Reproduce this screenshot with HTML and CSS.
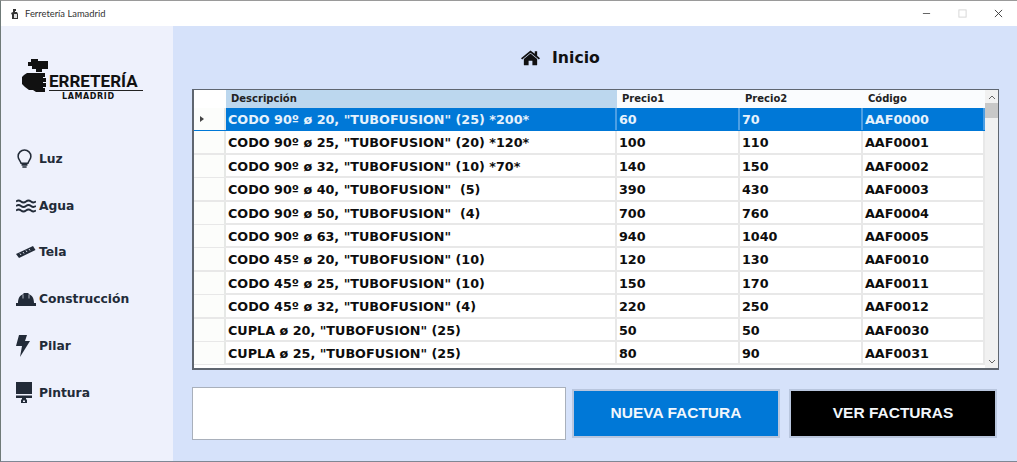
FILE: index.html
```html
<!DOCTYPE html>
<html lang="es">
<head>
<meta charset="utf-8">
<title>Ferretería Lamadrid</title>
<link rel="stylesheet" href="styles.css">
</head>
<body>
<div class="window">
  <header class="titlebar">
    <svg class="app-icon" viewBox="0 0 12 12"><path d="M4 1h3v2H6v1h2l1 2v5H3V7L2 5l2-1z" fill="#333"/><path d="M5 6h3v4H5z" fill="#ddd"/></svg>
    <span class="app-title">Ferretería Lamadrid</span>
    <div class="controls">
      <svg class="ctl" viewBox="0 0 10 10"><path d="M1 5h8" stroke="#555" stroke-width="1"/></svg>
      <svg class="ctl" viewBox="0 0 10 10"><rect x="1" y="1" width="8" height="8" fill="none" stroke="#d4d4d4"/></svg>
      <svg class="ctl" viewBox="0 0 10 10"><path d="M1 1l8 8M9 1l-8 8" stroke="#333" stroke-width="1"/></svg>
    </div>
  </header>
  <div class="body">
    <aside class="sidebar">
      <div class="logo">
        <svg class="logo-hand" viewBox="0 0 28 34">
          <path d="M9 0h7v2h10v8h-6v3h-6v-3H10V7H6V3h3z" fill="#111"/>
          <path d="M5 14h18v4h-2v1h3v4h-3v1h3v4h-3v1h2v4h-9l-3-2H7l-4-3-3-3v-7l2-2z" fill="#111"/>
        </svg>
        <div class="logo-text">
          <span class="logo-main">ERRETERÍA</span>
          <span class="logo-rule"></span>
          <span class="logo-sub">LAMADRID</span>
        </div>
      </div>
      <nav class="menu">
        <a class="menu-item"><span class="menu-icon"><svg viewBox="0 0 20 24" width="17" height="21"><path d="M10 2a7.500 7.500 0 0 0-7.500 7.500c0 3.200 2.600 5 3.400 8h8.200c.8-3 3.400-4.800 3.400-8A7.500 7.500 0 0 0 10 2z" fill="none" stroke="#222b38" stroke-width="1.800"/><path d="M6.500 19.500h7M7.500 22h5" stroke="#222b38" stroke-width="2"/></svg></span>Luz</a>
        <a class="menu-item"><span class="menu-icon"><svg viewBox="0 0 20 14" width="20" height="14"><path d="M0 2.500q2.500-2 5 0t5 0 5 0 5 0M0 7q2.500-2 5 0t5 0 5 0 5 0M0 11.500q2.500-2 5 0t5 0 5 0 5 0" fill="none" stroke="#222b38" stroke-width="1.800"/></svg></span>Agua</a>
        <a class="menu-item"><span class="menu-icon"><svg viewBox="0 0 20 12" width="20" height="12"><path d="M0 8L17 0l2.500 4L3 12z" fill="#222b38"/><path d="M4 7.500l1 1.500M7 6l1 1.500M10 4.500l1 1.500M13 3l1 1.500" stroke="#eef1fc" stroke-width=".9"/></svg></span>Tela</a>
        <a class="menu-item"><span class="menu-icon"><svg viewBox="0 0 20 15" width="20" height="15"><path d="M2 11C2 6 4 3 7.500 2V1h5v1C16 3 18 6 18 11h2v3H0v-3z" fill="#222b38"/><path d="M7 2.500v4M13 2.500v4" stroke="#eef1fc" stroke-width=".7"/></svg></span>Construcción</a>
        <a class="menu-item"><span class="menu-icon"><svg viewBox="0 0 14 22" width="14" height="22"><path d="M3 0h8L9 6h5L4 22l2-11H0z" fill="#222b38"/></svg></span>Pilar</a>
        <a class="menu-item"><span class="menu-icon"><svg viewBox="0 0 16 21" width="16" height="21"><path d="M0 0h16v12H0z" fill="#222b38"/><path d="M0 13.500h16v2.500H10v1.500h1v3.500H5v-3.500h1V16H0z" fill="#222b38"/><path d="M7 18.500h2v1.500H7z" fill="#eef1fc"/></svg></span>Pintura</a>
      </nav>
    </aside>
    <main class="main">
      <h1 class="heading">
        <svg class="home" viewBox="0 0 20 16"><path d="M10 3.200L3 9v6a.7.700 0 0 0 .7.700H8V11h4v4.700h4.300A.7.700 0 0 0 17 15V9z" fill="#111"/><path d="M10 0L0 8.200l1.200 1.400L10 2.400l8.800 7.200L20 8.200l-3-2.500V1h-2.500v2.600z" fill="#111"/></svg>
        Inicio
      </h1>
      <section class="grid">
        <div class="table">
          <div class="row head">
            <div class="gutter"></div>
            <div class="hcell sorted">Descripción</div>
            <div class="hcell">Precio1</div>
            <div class="hcell">Precio2</div>
            <div class="hcell">Código</div>
          </div>
          <div class="row selected"><div class="gutter"><span class="arrow"></span></div><div class="cell">CODO 90º ø 20, "TUBOFUSION" (25) *200*</div><div class="cell">60</div><div class="cell">70</div><div class="cell">AAF0000</div></div>
          <div class="row"><div class="gutter"></div><div class="cell">CODO 90º ø 25, "TUBOFUSION" (20) *120*</div><div class="cell">100</div><div class="cell">110</div><div class="cell">AAF0001</div></div>
          <div class="row"><div class="gutter"></div><div class="cell">CODO 90º ø 32, "TUBOFUSION" (10) *70*</div><div class="cell">140</div><div class="cell">150</div><div class="cell">AAF0002</div></div>
          <div class="row"><div class="gutter"></div><div class="cell">CODO 90º ø 40, "TUBOFUSION"  (5)</div><div class="cell">390</div><div class="cell">430</div><div class="cell">AAF0003</div></div>
          <div class="row"><div class="gutter"></div><div class="cell">CODO 90º ø 50, "TUBOFUSION"  (4)</div><div class="cell">700</div><div class="cell">760</div><div class="cell">AAF0004</div></div>
          <div class="row"><div class="gutter"></div><div class="cell">CODO 90º ø 63, "TUBOFUSION"</div><div class="cell">940</div><div class="cell">1040</div><div class="cell">AAF0005</div></div>
          <div class="row"><div class="gutter"></div><div class="cell">CODO 45º ø 20, "TUBOFUSION" (10)</div><div class="cell">120</div><div class="cell">130</div><div class="cell">AAF0010</div></div>
          <div class="row"><div class="gutter"></div><div class="cell">CODO 45º ø 25, "TUBOFUSION" (10)</div><div class="cell">150</div><div class="cell">170</div><div class="cell">AAF0011</div></div>
          <div class="row"><div class="gutter"></div><div class="cell">CODO 45º ø 32, "TUBOFUSION" (4)</div><div class="cell">220</div><div class="cell">250</div><div class="cell">AAF0012</div></div>
          <div class="row"><div class="gutter"></div><div class="cell">CUPLA ø 20, "TUBOFUSION" (25)</div><div class="cell">50</div><div class="cell">50</div><div class="cell">AAF0030</div></div>
          <div class="row"><div class="gutter"></div><div class="cell">CUPLA ø 25, "TUBOFUSION" (25)</div><div class="cell">80</div><div class="cell">90</div><div class="cell">AAF0031</div></div>
        </div>
        <div class="scrollbar">
          <svg class="sb-btn" viewBox="0 0 8 5"><path d="M1 4l3-3 3 3" fill="none" stroke="#666" stroke-width="1"/></svg>
          <div class="sb-thumb"></div>
          <svg class="sb-btn sb-down" viewBox="0 0 8 5"><path d="M1 1l3 3 3-3" fill="none" stroke="#666" stroke-width="1"/></svg>
        </div>
      </section>
      <div class="actions">
        <input class="search" type="text" aria-label="Buscar">
        <button class="btn btn-blue">NUEVA FACTURA</button>
        <button class="btn btn-black">VER FACTURAS</button>
      </div>
    </main>
  </div>
</div>
</body>
</html>
```
FILE: styles.css
```css
* { box-sizing: border-box; }
html, body { margin: 0; height: 100%; }
body { font-family: "DejaVu Sans", sans-serif; overflow: hidden; }

.window {
  width: 1017px; height: 462px;
  display: flex; flex-direction: column;
  border-top: 1px solid #9a9a9a;
  border-left: 1px solid #6f7a78;
  border-bottom: 1px solid #7f8794;
  background: #fff;
}
.titlebar { height: 25px; flex: none; display: flex; align-items: center; padding-left: 8px; background: #fff; }
.app-icon { width: 12px; height: 12px; }
.app-title { margin-left: 4px; font: 9.400px Lato, sans-serif; color: #333; }
.controls { margin-left: auto; display: flex; align-items: center; gap: 27px; padding-right: 14px; }
.ctl { width: 9px; height: 9px; display: block; }

.body { flex: 1; display: flex; min-height: 0; }

.sidebar { width: 172px; flex: none; background: #eef1fc; padding-top: 33px; }
.logo { display: flex; align-items: flex-start; margin-left: 21px; height: 46px; }
.logo-hand { width: 28px; height: 34px; display: block; flex: none; }
.logo-text { display: flex; flex-direction: column; align-items: flex-start; margin-left: -1px; padding-top: 13px; }
.logo-main { font: 700 17px/19px Roboto, sans-serif; color: #111; }
.logo-rule { width: 94px; height: 1px; background: #222; margin-top: -1px; }
.logo-sub { font: 700 8px/10px "DejaVu Sans", sans-serif; letter-spacing: .6px; color: #111; margin: 1px 0 0 13px; }

.menu { display: flex; flex-direction: column; margin-top: 30.400px; }
.menu-item {
  height: 46.800px; display: flex; align-items: center;
  font-weight: 700; font-size: 12.300px; color: #222b38;
}
.menu-icon { width: 38px; padding-left: 15px; display: flex; justify-content: flex-start; flex: none; }
.menu-icon svg { display: block; }

.main { flex: 1; background: #d6e2fa; padding: 0 18px 0 19px; min-width: 0; }
.heading {
  margin: 0; height: 63px; padding: 0 0 0 329px;
  display: flex; align-items: center; gap: 12px;
  font-size: 15.700px; font-weight: 700; color: #111; line-height: 18px;
}
.home { width: 19px; height: 16px; display: block; }

.grid {
  width: 807px; height: 281px;
  display: flex;
  background: #fff;
  border: 1px solid #5f6670; border-left-width: 2px; border-bottom-width: 2px;
  overflow: hidden;
}
.table { width: 791px; flex: none; }
.row {
  display: grid; grid-template-columns: 32px 391px 123px 123px 122px;
  height: 23.400px; border-bottom: 2px solid #e8e8e8;
}
.row.head { height: 18px; border-bottom: 0; }
.gutter { background: #fcfdfb; border-right: 2px solid #e6e8e6; display: flex; align-items: center; padding-left: 6px; }
.head .gutter { background: #fff; border-right: 0; }
.arrow { width: 0; height: 0; border-left: 4px solid #444; border-top: 3px solid transparent; border-bottom: 3px solid transparent; }
.hcell { font-size: 10px; font-weight: 700; color: #222; padding: 1px 0 0 5px; line-height: 16px; background: #fafcfe; }
.hcell.sorted { background: #bcd7ee; }
.cell {
  font-size: 12.750px; font-weight: 700; color: #0d0d0d;
  padding: 1px 0 0 2px; line-height: 21px; white-space: pre;
  border-right: 2px solid #e8e8e8;
}
.selected { border-bottom-color: #0078d7; }
.selected .cell { background: #0078d7; color: #e6f2fc; border-right-color: #4d9fe4; }

.scrollbar { flex: 1; background: #f1f1f1; display: flex; flex-direction: column; align-items: center; position: relative; }
.sb-btn { width: 8px; height: 5px; margin-top: 5px; flex: none; }
.sb-thumb { width: 100%; height: 15px; margin-top: 3px; background: #c8c8c8; }
.sb-down { margin-top: auto; margin-bottom: 4px; }

.actions { display: flex; align-items: center; margin-top: 17px; }
.search { width: 374px; height: 53px; background: #fff; border: 1px solid #a9b0bb; outline: 0; padding: 0; }
.btn {
  width: 208px; height: 49px;
  font: 700 15.500px "Liberation Sans", sans-serif; color: #f2f7fc;
  border: 2px solid #b9c6de; cursor: pointer; padding: 0 0 2px;
}
.btn-blue { margin-left: 6px; background: #0078d7; }
.btn-black { margin-left: 9px; background: #000; }
```
